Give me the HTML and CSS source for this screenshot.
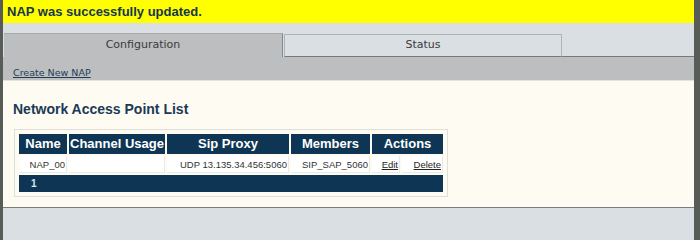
FILE: index.html
```html
<!DOCTYPE html>
<html>
<head>
<meta charset="utf-8">
<link rel="stylesheet" href="styles.css">
</head>
<body>
<div class="frame">
  <div class="side side-left"></div>
  <div class="main">
    <div class="banner">NAP was successfully updated.</div>
    <div class="tabs">
      <div class="tab tab-active">Configuration</div>
      <div class="tab tab-idle">Status</div>
      <div class="tab-fill"></div>
    </div>
    <div class="subbar"><a class="sublink" href="#">Create New NAP</a></div>
    <div class="content">
      <h2 class="title">Network Access Point List</h2>
      <div class="listbox">
        <table class="list">
          <colgroup>
            <col class="c-name"><col class="c-chan"><col class="c-sip"><col class="c-mem"><col class="c-edit"><col class="c-del">
          </colgroup>
          <thead>
            <tr>
              <th>Name</th>
              <th>Channel Usage</th>
              <th>Sip Proxy</th>
              <th>Members</th>
              <th colspan="2">Actions</th>
            </tr>
          </thead>
          <tbody>
            <tr class="row">
              <td>NAP_00</td>
              <td></td>
              <td>UDP 13.135.34.456:5060</td>
              <td>SIP_SAP_5060</td>
              <td><a href="#">Edit</a></td>
              <td><a href="#">Delete</a></td>
            </tr>
          </tbody>
          <tfoot>
            <tr><td class="pager" colspan="6">1</td></tr>
          </tfoot>
        </table>
      </div>
    </div>
    <div class="footer"></div>
  </div>
  <div class="side side-right"></div>
</div>
</body>
</html>
```
FILE: styles.css
```css
html, body {
  margin: 0;
  padding: 0;
  background: #d9dfe2;
}
.frame {
  display: flex;
  min-height: 100vh;
}
.side {
  background: #585c56;
  flex: none;
}
.side-left { width: 3px; }
.side-right { width: 6px; }
.main {
  flex: 1;
  display: flex;
  flex-direction: column;
  background: #d9dfe2;
  min-width: 0;
}
.banner {
  height: 23px;
  background: #ffff00;
  color: #17364c;
  font: bold 13px/23px "Liberation Sans", Arial, sans-serif;
  padding-left: 4px;
}
.tabs {
  display: flex;
  align-items: flex-end;
  height: 34px;
  padding-left: 1px;
  box-sizing: border-box;
}
.tab {
  font: 11px "DejaVu Sans", sans-serif;
  color: #3a3a3a;
  text-align: center;
  box-sizing: border-box;
}
.tab-active {
  width: 279px;
  height: 24px;
  line-height: 22px;
  background: #bdbebf;
  border-top: 1px solid #a9aaab;
  border-right: 1px solid #85878a;
}
.tab-idle {
  width: 278px;
  height: 23px;
  line-height: 20px;
  margin-left: 1px;
  background: #d9dfe2;
  border: 1px solid #aeb3b6;
  border-bottom: 1px solid #76787a;
}
.tab-fill {
  flex: 1;
  height: 1px;
  background: #76787a;
}
.subbar {
  background: #bdbebf;
  height: 24px;
  padding-top: 5px;
  box-sizing: border-box;
  padding-left: 10px;
  border-bottom: 1px solid #e6e3dc;
}
.sublink {
  font: 9.5px/12px "DejaVu Sans", sans-serif;
  color: #1e3c57;
  text-decoration: underline;
}
.content {
  background: #fefbf3;
  height: 126px;
  box-sizing: border-box;
  padding-top: 20px;
  padding-left: 10px;
}
.title {
  margin: 0;
  font: bold 14px/16px "Liberation Sans", Arial, sans-serif;
  color: #1a3a55;
}
.listbox {
  display: inline-block;
  margin-top: 12px;
  margin-left: 1px;
  padding: 2px;
  border: 1px solid #dfdfda;
  background: #fefbf3;
}
.list {
  table-layout: fixed;
  width: 428px;
  border-collapse: separate;
  border-spacing: 2px;
}
.c-name { width: 48px; }
.c-chan { width: 96px; }
.c-sip { width: 122px; }
.c-mem { width: 79px; }
.c-edit { width: 28px; }
.c-del { width: 41px; }
.list th {
  background: #0e3654;
  color: #ffffff;
  font: bold 13px/16px "Liberation Sans", Arial, sans-serif;
  padding: 2px 0;
  text-align: center;
  white-space: nowrap;
  overflow: hidden;
}
.row td {
  background: #ffffff;
  color: #333333;
  font: 9.5px/11px "Liberation Sans", Arial, sans-serif;
  padding: 3px 2px 3px 0;
  text-align: right;
  white-space: nowrap;
  box-shadow: inset -1px -1px 0 #ebe9e3;
}
.row td a {
  color: #222222;
  text-decoration: underline;
}
.pager {
  background: #0e3654;
  color: #d7e6f3;
  font: bold 10px/11px "Liberation Sans", Arial, sans-serif;
  padding: 3px 12px;
  text-align: left;
}
.footer {
  flex: 1;
  border-top: 1px solid #7a7c7e;
  background: #d9dfe2;
}
```
